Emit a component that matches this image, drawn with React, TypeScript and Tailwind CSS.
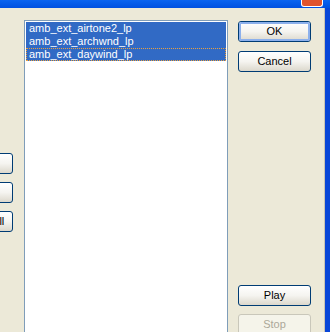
import type { ReactNode } from "react";

const font = { fontFamily: '"Liberation Sans", Arial, sans-serif' };

const items = ["amb_ext_airtone2_lp", "amb_ext_archwnd_lp", "amb_ext_daywind_lp"];

interface XpButtonProps {
  children: ReactNode;
  isDefault?: boolean;
  disabled?: boolean;
}

function XpButton({ children, isDefault, disabled }: XpButtonProps) {
  if (disabled) {
    return (
      <button
        className="h-[21px] w-[73px] shrink-0 rounded-[3px] border border-[#c9c7ba] bg-[#f5f4ea] text-[11px] leading-none text-[#aca899]"
        type="button"
      >
        {children}
      </button>
    );
  }
  return (
    <button
      className="h-[21px] w-[73px] shrink-0 rounded-[3px] border border-[#003c74] bg-gradient-to-b from-white via-[#f5f4f0] to-[#dcd8cc] p-0 text-[11px] leading-none text-black"
      type="button"
    >
      <span
        className={
          isDefault
            ? "flex h-full w-full items-center justify-center rounded-[2px] border-2 border-[#8cb0ec]"
            : "flex h-full w-full items-center justify-center"
        }
      >
        {children}
      </span>
    </button>
  );
}

export default function App() {
  return (
    <div className="flex h-[332px] w-[336px] overflow-hidden bg-white" style={font}>
      <div className="flex w-[330px] flex-col">
        {/* title bar strip */}
        <div className="flex h-[8px] shrink-0 justify-end bg-gradient-to-b from-[#0a64f0] to-[#0050e0] pr-[7px]">
          <div className="h-[7px] w-[22px] rounded-b-[3px] border border-t-0 border-white bg-[#e0532d]" />
        </div>

        <div className="flex min-h-0 flex-1">
          <div className="flex min-h-0 flex-1 bg-[#ece9d8] pt-[12px]">
            {/* left button column, mostly off screen */}
            <div className="w-[24px] shrink-0 overflow-hidden">
              <div className="ml-[-60px] flex flex-col gap-[8px] pt-[133px]">
                <XpButton>Add</XpButton>
                <XpButton>Remove</XpButton>
                <XpButton>Remove All</XpButton>
              </div>
            </div>

            {/* list box */}
            <div className="h-[330px] w-[204px] shrink-0 border border-[#7f9db9] bg-white p-px">
              {items.map((item, i) => (
                <div
                  className={
                    i === items.length - 1
                      ? "h-[13px] border border-dotted border-[#e8a040] bg-[#316ac5] pl-[2px] text-[11px] leading-[11px] whitespace-nowrap text-white"
                      : "h-[13px] bg-[#316ac5] pl-[3px] text-[11px] leading-[13px] whitespace-nowrap text-white"
                  }
                  key={item}
                >
                  {item}
                </div>
              ))}
            </div>

            {/* right button column */}
            <div className="ml-[10px] flex flex-col pt-px">
              <XpButton isDefault>OK</XpButton>
              <div className="h-[9px] shrink-0" />
              <XpButton>Cancel</XpButton>
              <div className="h-[213px] shrink-0" />
              <XpButton>Play</XpButton>
              <div className="h-[8px] shrink-0" />
              <XpButton disabled>Stop</XpButton>
            </div>
          </div>
          <div className="w-px bg-[#c8c4b4]" />
          <div className="w-[5px] bg-[#0846d8]" />
        </div>
      </div>
    </div>
  );
}
